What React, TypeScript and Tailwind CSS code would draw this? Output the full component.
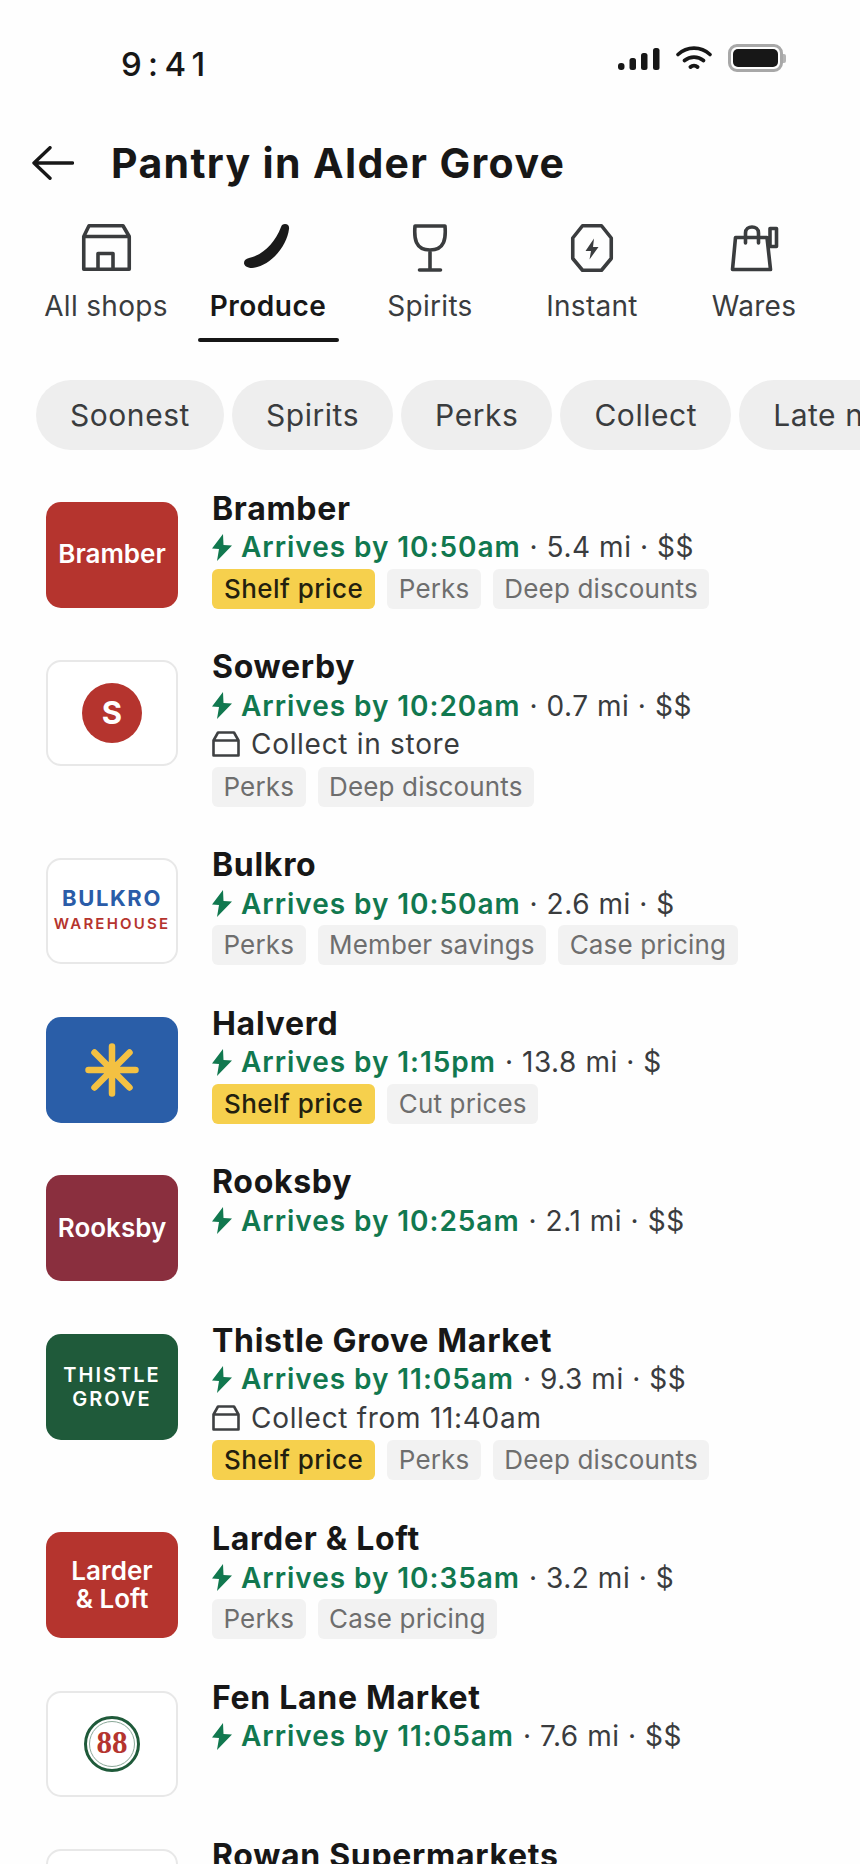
import type { ReactNode } from "react"

type Shop = {
  name: string
  eta: string
  meta: string
  collect?: string
  shelf?: boolean
  tags: string[]
  logo: ReactNode
}

function Tile({ bg, children }: { bg: string; children: ReactNode }) {
  return (
    <div className={`flex h-[106px] w-[132px] flex-col items-center justify-center rounded-[15px] font-semibold text-white ${bg}`}>
      {children}
    </div>
  )
}

function WhiteTile({ children }: { children: ReactNode }) {
  return (
    <div className="flex h-[106px] w-[132px] flex-col items-center justify-center rounded-[15px] border-2 border-[#e8e8e8] bg-white">
      {children}
    </div>
  )
}

const shops: Shop[] = [
  {
    name: "Bramber",
    eta: "Arrives by 10:50am",
    meta: "· 5.4 mi · $$",
    shelf: true,
    tags: ["Perks", "Deep discounts"],
    logo: <Tile bg="bg-[#b5342e]"><span className="mb-[2px] text-[26px] leading-none">Bramber</span></Tile>,
  },
  {
    name: "Sowerby",
    eta: "Arrives by 10:20am",
    meta: "· 0.7 mi · $$",
    collect: "Collect in store",
    tags: ["Perks", "Deep discounts"],
    logo: (
      <WhiteTile>
        <div className="flex h-[60px] w-[60px] items-center justify-center rounded-full bg-[#b5342e] text-[31px] font-bold text-white">S</div>
      </WhiteTile>
    ),
  },
  {
    name: "Bulkro",
    eta: "Arrives by 10:50am",
    meta: "· 2.6 mi · $",
    tags: ["Perks", "Member savings", "Case pricing"],
    logo: (
      <WhiteTile>
        <span className="text-[22px] leading-[26px] font-bold tracking-[1.6px] text-[#2a5ca8]">BULKRO</span>
        <span className="text-[15px] leading-[26px] font-semibold tracking-[2.2px] text-[#b5342e]">WAREHOUSE</span>
      </WhiteTile>
    ),
  },
  {
    name: "Halverd",
    eta: "Arrives by 1:15pm",
    meta: "· 13.8 mi · $",
    shelf: true,
    tags: ["Cut prices"],
    logo: (
      <Tile bg="bg-[#2a5ea8]">
        <svg width="56" height="56" viewBox="0 0 56 56" fill="none" stroke="#f4c142" strokeWidth="6.5" strokeLinecap="round">
          <path d="M28 4.5V51.5M4.5 28H51.5M10.5 10.5L45.5 45.5M45.5 10.5L10.5 45.5" />
        </svg>
      </Tile>
    ),
  },
  {
    name: "Rooksby",
    eta: "Arrives by 10:25am",
    meta: "· 2.1 mi · $$",
    tags: [],
    logo: <Tile bg="bg-[#8a2f3e]"><span className="text-[26px] leading-none">Rooksby</span></Tile>,
  },
  {
    name: "Thistle Grove Market",
    eta: "Arrives by 11:05am",
    meta: "· 9.3 mi · $$",
    collect: "Collect from 11:40am",
    shelf: true,
    tags: ["Perks", "Deep discounts"],
    logo: (
      <Tile bg="bg-[#1f5a3a]">
        <span className="text-[20px] leading-[24px] font-semibold tracking-[2px]">THISTLE</span>
        <span className="text-[20px] leading-[24px] font-semibold tracking-[2px]">GROVE</span>
      </Tile>
    ),
  },
  {
    name: "Larder & Loft",
    eta: "Arrives by 10:35am",
    meta: "· 3.2 mi · $",
    tags: ["Perks", "Case pricing"],
    logo: (
      <Tile bg="bg-[#b5342e]">
        <span className="text-[26px] leading-[28px]">Larder</span>
        <span className="text-[26px] leading-[28px]">&amp; Loft</span>
      </Tile>
    ),
  },
  {
    name: "Fen Lane Market",
    eta: "Arrives by 11:05am",
    meta: "· 7.6 mi · $$",
    tags: [],
    logo: (
      <WhiteTile>
        <div className="flex h-[56px] w-[56px] items-center justify-center rounded-full border-[3px] border-[#1f5a3a]">
          <div className="flex h-[46px] w-[46px] items-center justify-center rounded-full border-[1.5px] border-[#8aa898] font-['Liberation_Serif',serif] text-[31px] font-bold text-[#b5342e]">
            88
          </div>
        </div>
      </WhiteTile>
    ),
  },
  {
    name: "Rowan Supermarkets",
    eta: "Arrives by 11:20am",
    meta: "· 4.4 mi · $",
    tags: [],
    logo: <WhiteTile>{null}</WhiteTile>,
  },
]

const tabs: { label: string; active?: boolean; icon: ReactNode }[] = [
  {
    label: "All shops",
    icon: (
      <path d="M5.75 47.25V14.5L11 3.75H45L51.25 14.5V47.25ZM5.75 14.5H51.25M20 47.25V31.5H35V47.25" />
    ),
  },
  {
    label: "Produce",
    active: true,
    icon: (
      <path
        stroke="none"
        fill="#1a1a1a"
        d="M45 2C48 2 49.5 4 49 7C47 24 31 44 12 46C7 46 4 43.5 4 41C4 38 6 37 9 36C23 33 35 21 41 5C41.5 3 43 2 45 2Z"
      />
    ),
  },
  {
    label: "Spirits",
    icon: <path d="M13 4H43C44 16 43 28 28 28C13 28 12 16 13 4ZM28 28V48M17.5 48H38.5" />,
  },
  {
    label: "Instant",
    icon: (
      <>
        <path d="M18.5 3.75H37.5L47.25 16V36.5L37.5 48.25H18.5L8.75 36.5V16Z" />
        <path stroke="none" fill="#3a3c3e" d="M30 16.5L21.5 29H27L25.5 37.5L34.5 25H29Z" />
      </>
    ),
  },
  {
    label: "Wares",
    icon: (
      <path d="M9.5 15.5H41L44.5 47.5H6.5ZM19.5 21V11C19.5 3 32.5 3 32.5 11V21M44 6.5H50.5V24.5H44Z" />
    ),
  },
]

const chips = ["Soonest", "Spirits", "Perks", "Collect", "Late night"]

function Bolt() {
  return (
    <svg width="20" height="27" viewBox="0 0 20 27" className="mr-[9px] shrink-0" fill="#11784f">
      <path d="M11 0L0 14.5L7 15L5 27L20 11.5L11.5 11Z" />
    </svg>
  )
}

function StoreGlyph() {
  return (
    <svg width="28" height="26" viewBox="0 0 28 26" className="mr-[11px] shrink-0" fill="none" stroke="#3e4042" strokeWidth="2.6" strokeLinejoin="round">
      <path d="M1.5 24.5V9.5L6 1.5H22L26.5 9.5V24.5ZM1.5 9.5H26.5" />
    </svg>
  )
}

function StatusBar() {
  return (
    <div className="flex h-[100px] items-start justify-between pr-[74px] pl-[121px]">
      <span className="mt-[44px] text-[33px] leading-[40px] font-medium tracking-[6.3px] text-[#171717]">9:41</span>
      <div className="mt-[44px] flex items-center">
        <svg width="42" height="22" viewBox="0 0 42 22" fill="#171717" className="mt-[2px]">
          <rect x="0" y="15" width="6.5" height="7" rx="3" />
          <rect x="11.5" y="10" width="6.5" height="12" rx="2.5" />
          <rect x="23" y="5" width="6.5" height="17" rx="2.5" />
          <rect x="35" y="0" width="6.5" height="22" rx="2.5" />
        </svg>
        <svg width="36" height="24" viewBox="0 0 36 24" fill="none" stroke="#171717" strokeWidth="3.6" strokeLinecap="round" className="ml-[16px]">
          <path d="M2 8.5C11 0 25 0 34 8.5M8.5 14.5C14 10 22 10 27.5 14.5" />
          <path d="M14.5 21C16.5 19.3 19.5 19.3 21.5 21" strokeWidth="4" />
        </svg>
        <div className="ml-[16px] flex items-center">
          <div className="h-[28px] w-[55px] rounded-[9px] border-[3px] border-[#a8a8a8] p-[2px]">
            <div className="h-full w-full rounded-[5px] bg-[#171717]" />
          </div>
          <div className="h-[9px] w-[3px] rounded-r-[2px] bg-[#b5b5b5]" />
        </div>
      </div>
    </div>
  )
}

function ShopRow({ shop }: { shop: Shop }) {
  return (
    <div className="flex items-start">
      <div className="mt-[13px] mb-[1px] shrink-0">{shop.logo}</div>
      <div className="ml-[34px] min-w-0">
        <div className="h-[39.5px] text-[32px] leading-[40px] font-bold tracking-[0.7px] whitespace-nowrap text-[#171717]">{shop.name}</div>
        <div className="flex h-[38px] items-center text-[28px] whitespace-nowrap text-[#3a3c3e]">
          <Bolt />
          <span className="font-semibold tracking-[0.95px] text-[#11784f]">{shop.eta}</span>
          <span className="ml-[9px] tracking-[0.55px]">{shop.meta}</span>
        </div>
        {shop.collect && (
          <div className="flex h-[39.5px] items-center text-[28px] tracking-[0.7px] whitespace-nowrap text-[#3a3c3e]">
            <StoreGlyph />
            {shop.collect}
          </div>
        )}
        {(shop.shelf || shop.tags.length > 0) && (
          <div className="mt-[2.5px] flex gap-[12px] text-[26px] leading-[40px] whitespace-nowrap">
            {shop.shelf && <span className="h-[40px] rounded-[6px] bg-[#f6d04d] px-[12px] font-medium tracking-[0.45px] text-[#231f0f]">Shelf price</span>}
            {shop.tags.map((t) => (
              <span key={t} className="h-[40px] rounded-[6px] bg-[#f2f2f2] px-[11.5px] tracking-[0.15px] text-[#6e6e6e]">{t}</span>
            ))}
          </div>
        )}
      </div>
    </div>
  )
}

export default function App() {
  return (
    <div className="h-[1864px] w-[860px] overflow-hidden bg-[#fefefe] font-['Inter',sans-serif]">
      <StatusBar />

      <div className="mt-[31px] flex h-[64px] items-center pl-[32px]">
        <svg width="42" height="34" viewBox="0 0 42 34" fill="none" stroke="#171717" strokeWidth="3.4" strokeLinecap="round" strokeLinejoin="round">
          <path d="M40.5 17H2M18 1.7L2 17L18 32.3" />
        </svg>
        <h1 className="ml-[37px] text-[41px] leading-none font-bold tracking-[1.35px] text-[#171717]">Pantry in Alder Grove</h1>
      </div>

      <div className="mt-[27px] grid grid-cols-[repeat(5,162px)] pl-[25px]">
        {tabs.map((tab) => (
          <div key={tab.label} className="flex flex-col items-center">
            <svg width="56" height="52" viewBox="0 0 56 52" fill="none" stroke="#3a3c3e" strokeWidth="3.6" strokeLinecap="round" strokeLinejoin="round">
              {tab.icon}
            </svg>
            <span className={`mt-[15px] h-[34px] text-[28px] leading-[34px] ${tab.active ? "font-semibold tracking-[0.5px] text-[#171717]" : "tracking-[0.3px] text-[#3a3c3e]"}`}>
              {tab.label}
            </span>
            <div className={`mt-[15px] h-[4px] w-[141px] rounded-full ${tab.active ? "bg-[#171717]" : "bg-transparent"}`} />
          </div>
        ))}
      </div>

      <div className="mt-[38px] flex gap-[8px] pl-[36px]">
        {chips.map((c) => (
          <div key={c} className="flex h-[70px] shrink-0 items-center rounded-full bg-[#eeeeee] px-[34px] text-[30px] tracking-[0.55px] whitespace-nowrap text-[#3a3c3e]">
            {c}
          </div>
        ))}
      </div>

      <div className="mt-[38.5px] flex flex-col gap-[38.6px] pl-[46px]">
        {shops.map((s) => (
          <ShopRow key={s.name} shop={s} />
        ))}
      </div>
    </div>
  )
}
